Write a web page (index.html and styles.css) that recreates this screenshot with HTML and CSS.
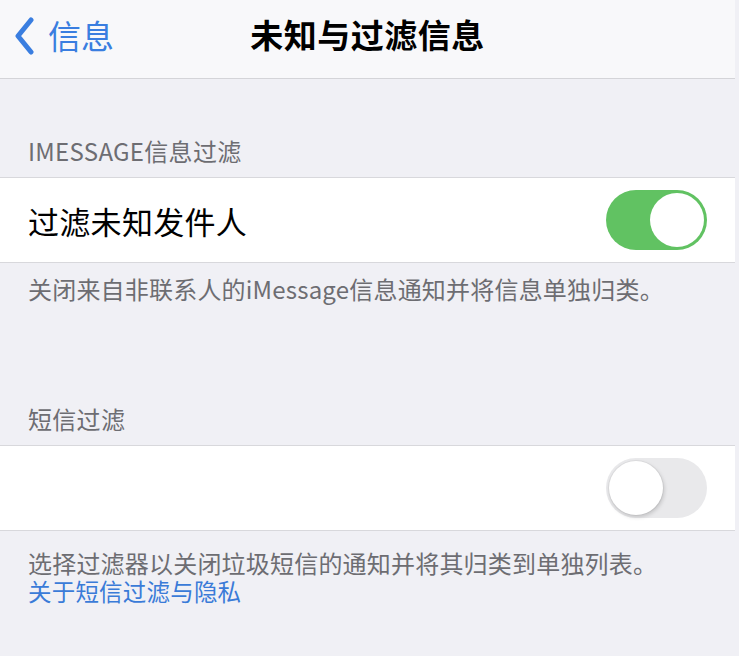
FILE: index.html
```html
<!DOCTYPE html>
<html lang="zh-CN">
<head>
<meta charset="utf-8">
<title>未知与过滤信息</title>
<link rel="stylesheet" href="styles.css">
</head>
<body>
<div class="page">
  <header class="nav">
    <a class="back">
      <svg class="chev" width="24" height="40" viewBox="0 0 24 40"><path d="M21 4 L8 20 L21 36" fill="none" stroke="#3a7ee0" stroke-width="5" stroke-linecap="round" stroke-linejoin="round"/></svg>
      <span class="back-text">信息</span>
    </a>
    <h1 class="title">未知与过滤信息</h1>
  </header>

  <div class="sec-head sec-head-1">IMESSAGE信息过滤</div>
  <div class="row">
    <span class="row-label">过滤未知发件人</span>
    <span class="toggle on"><span class="knob"></span></span>
  </div>
  <div class="sec-foot sec-foot-1">关闭来自非联系人的iMessage信息通知并将信息单独归类。</div>

  <div class="sec-head sec-head-2">短信过滤</div>
  <div class="row">
    <span class="row-label"></span>
    <span class="toggle off"><span class="knob"></span></span>
  </div>
  <div class="sec-foot sec-foot-2">
    <p class="foot-line">选择过滤器以关闭垃圾短信的通知并将其归类到单独列表。</p>
    <a class="foot-line link">关于短信过滤与隐私</a>
  </div>
</div>
</body>
</html>
```

FILE: styles.css
```css
html, body {
  margin: 0;
  padding: 0;
  background: #f0f0f5;
}
body {
  font-family: "Noto Sans CJK SC", "Noto Sans", sans-serif;
  width: 739px;
  height: 656px;
  overflow: hidden;
}
.page {
  width: 735px;
}
.nav {
  height: 78px;
  background: #f8f8fa;
  border-bottom: 1px solid #d4d4d8;
  display: flex;
  align-items: center;
  justify-content: center;
  position: relative;
}
.back {
  position: absolute;
  left: 10px;
  top: 0;
  height: 72px;
  display: flex;
  align-items: center;
  gap: 14px;
  color: #3a7ee0;
}
.back-text {
  font-size: 33px;
  line-height: 40px;
  margin-top: -2px;
}
.title {
  margin: 0 0 10px 0;
  font-size: 33px;
  font-weight: 700;
  color: #000;
  line-height: 40px;
  letter-spacing: 0.5px;
}
.sec-head {
  font-size: 24px;
  line-height: 28px;
  color: #6d6d72;
  padding: 0 0 12px 28px;
  letter-spacing: 0.3px;
}
.sec-head-1 { padding-top: 58px; }
.sec-head-2 { padding-top: 102px; }
.row {
  height: 84px;
  background: #fff;
  border-top: 1px solid #d8d8dc;
  border-bottom: 1px solid #d8d8dc;
  display: flex;
  align-items: center;
  justify-content: space-between;
  padding: 0 28px;
}
.row-label {
  font-size: 31px;
  color: #000;
  letter-spacing: 0.3px;
}
.toggle {
  width: 101px;
  height: 60px;
  border-radius: 30px;
  box-sizing: border-box;
  display: flex;
  align-items: center;
  padding: 0 3px;
}
.toggle.on {
  background: #61c262;
  justify-content: flex-end;
}
.toggle.off {
  background: #e9e9eb;
  justify-content: flex-start;
}
.knob {
  width: 54px;
  height: 54px;
  border-radius: 50%;
  background: #fff;
}
.toggle.off .knob {
  box-shadow: 1px 2px 4px rgba(0,0,0,0.18), 0 0 0 1px rgba(0,0,0,0.04);
}
.sec-foot {
  font-size: 24px;
  line-height: 28px;
  color: #6d6d72;
  padding: 12px 28px 0 28px;
  letter-spacing: 0.2px;
}
.sec-foot-2 {
  padding-top: 18px;
  display: flex;
  flex-direction: column;
}
.foot-line {
  margin: 0;
  height: 28px;
  line-height: 28px;
}
.link {
  color: #3a7bd8;
  font-size: 23.5px;
}
```
